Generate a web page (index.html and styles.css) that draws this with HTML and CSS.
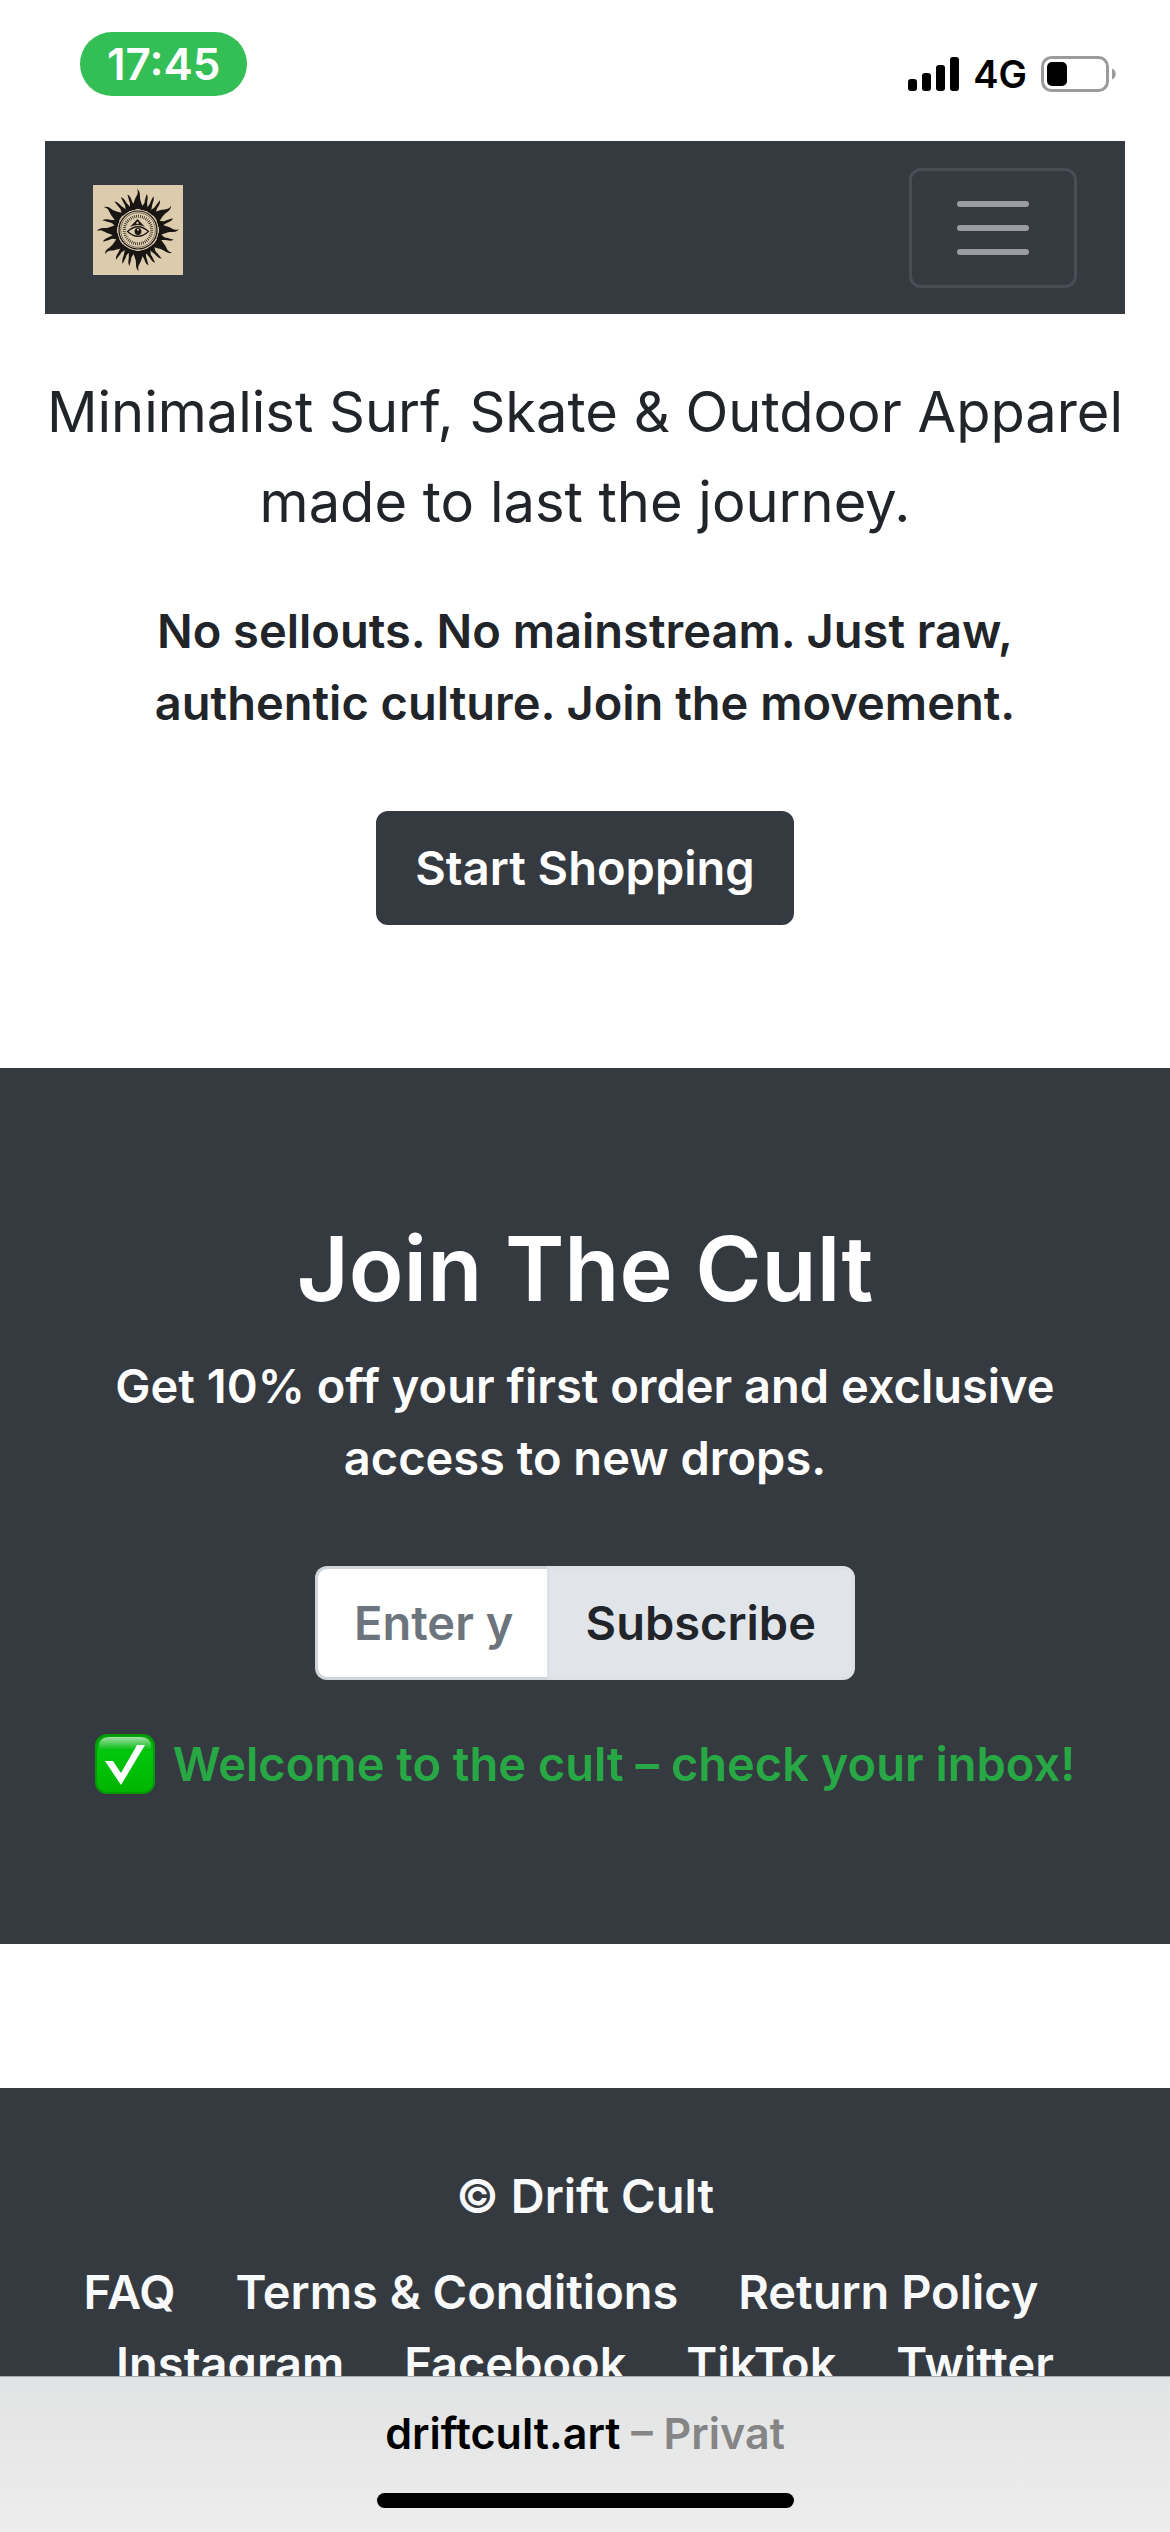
FILE: index.html
```html
<!DOCTYPE html>
<html lang="en">
<head>
<meta charset="utf-8">
<meta name="viewport" content="width=device-width, initial-scale=1">
<title>Drift Cult</title>
<link rel="stylesheet" href="styles.css">
</head>
<body>
<div class="status-bar">
  <div class="status-time">17:45</div>
  <div class="status-icons">
    <svg class="signal" width="51" height="36" viewBox="0 0 51 36" aria-hidden="true">
      <rect x="0" y="23" width="9" height="12" rx="3"/>
      <rect x="14" y="17" width="9" height="18" rx="3"/>
      <rect x="28" y="9" width="9" height="26" rx="3"/>
      <rect x="42" y="1" width="9" height="34" rx="3"/>
    </svg>
    <span class="network">4G</span>
    <svg class="battery" width="75" height="36" viewBox="0 0 75 36" aria-hidden="true">
      <rect x="1.5" y="1.5" width="65" height="33" rx="9" fill="none" stroke="#9b9b9b" stroke-width="3"/>
      <rect x="6" y="6" width="20" height="24" rx="5"/>
      <path d="M71 12.500c5 2 5 9 0 11z" fill="#9b9b9b"/>
    </svg>
  </div>
</div>

<header class="navbar">
  <a class="brand" href="#" aria-label="Drift Cult home">
    <svg class="logo" width="90" height="90" viewBox="-45 -45 90 90" aria-hidden="true">
      <defs>
        <path id="ray-big" d="M-7-20C-5-25-4-28-3-31C-1-35 1-37-1-41C2-39 2-36 2-33C2-29 4-26 6-20Q0-22-7-20z"/>
        <path id="ray-small" d="M-3-20C-3-25 0-26-1-30Q-1-33-1-37C2-34 1-31 2-28C3-25 3-23 3-20Q0-21-3-20z"/>
      </defs>
      <rect x="-45" y="-45" width="90" height="90" fill="#dccbac"/>
      <g fill="#191513">
        <use href="#ray-big"/>
        <use href="#ray-big" transform="rotate(55)"/>
        <use href="#ray-big" transform="rotate(90)"/>
        <use href="#ray-big" transform="rotate(125)"/>
        <use href="#ray-big" transform="rotate(180)"/>
        <use href="#ray-big" transform="rotate(235)"/>
        <use href="#ray-big" transform="rotate(270)"/>
        <use href="#ray-big" transform="rotate(305)"/>
        <use href="#ray-small" transform="rotate(15)"/>
        <use href="#ray-small" transform="rotate(26)"/>
        <use href="#ray-small" transform="rotate(38)"/>
        <use href="#ray-small" transform="rotate(73)"/>
        <use href="#ray-small" transform="rotate(107)"/>
        <use href="#ray-small" transform="rotate(142)"/>
        <use href="#ray-small" transform="rotate(154)"/>
        <use href="#ray-small" transform="rotate(165)"/>
        <use href="#ray-small" transform="rotate(195)"/>
        <use href="#ray-small" transform="rotate(206)"/>
        <use href="#ray-small" transform="rotate(218)"/>
        <use href="#ray-small" transform="rotate(253)"/>
        <use href="#ray-small" transform="rotate(287)"/>
        <use href="#ray-small" transform="rotate(322)"/>
        <use href="#ray-small" transform="rotate(334)"/>
        <use href="#ray-small" transform="rotate(345)"/>
      </g>
      <circle r="20.500" fill="#dccbac"/>
      <g fill="none" stroke="#191513">
        <circle r="19" stroke-width="1.200"/>
        <circle r="17.300" stroke-width=".5"/>
        <circle r="13.700" stroke-width="3" stroke-dasharray=".7 1.250"/>
      </g>
      <path d="M-.5-11L-10 0 0 8 10 0z" fill="#dccbac"/>
      <path d="M-.5-11L7-3Q0-7-8-3z" fill="#191513"/>
      <circle cx="-.5" cy="-7" r="1.200" fill="#dccbac"/>
      <path d="M-10.500 1.500Q0-8 10.500 1.500Q0 11-10.500 1.500z" fill="#dccbac" stroke="#191513" stroke-width="1.200"/>
      <circle cy="1.500" r="3.400" fill="#191513"/>
      <circle cy="-.2" r="1" fill="#dccbac"/>
    </svg>
  </a>
  <button class="toggler" type="button" aria-label="Toggle navigation">
    <svg width="72" height="54" viewBox="0 0 72 54" aria-hidden="true">
      <path d="M3 3h66M3 27h66M3 51h66" stroke="#9a9ca0" stroke-width="6" stroke-linecap="round"/>
    </svg>
  </button>
</header>

<main>
  <section class="hero">
    <p class="lead">Minimalist Surf, Skate &amp; Outdoor Apparel made to last the journey.</p>
    <p class="tagline">No sellouts. No mainstream. Just raw, authentic culture. Join the movement.</p>
    <a class="btn btn-dark" href="#">Start Shopping</a>
  </section>

  <section class="signup">
    <h2>Join The Cult</h2>
    <p>Get 10% off your first order and exclusive access to new drops.</p>
    <form class="input-group">
      <input type="email" placeholder="Enter your email" aria-label="Email address">
      <button class="btn btn-light" type="button">Subscribe</button>
    </form>
    <p class="success">
      <svg width="60" height="60" viewBox="0 0 60 60" aria-hidden="true">
        <defs>
          <linearGradient id="tick-fill" x2="0" y2="1">
            <stop offset="0" stop-color="#00a50a"/>
            <stop offset=".3" stop-color="#00c70c"/>
            <stop offset="1" stop-color="#00b400"/>
          </linearGradient>
          <linearGradient id="tick-shine" x2="0" y2="1">
            <stop offset="0" stop-color="#fff" stop-opacity=".65"/>
            <stop offset="1" stop-color="#fff" stop-opacity="0"/>
          </linearGradient>
        </defs>
        <rect x="1" y="1" width="58" height="58" rx="11" fill="url(#tick-fill)" stroke="#009a06" stroke-width="2"/>
        <path d="M4 16V13Q4 3 14 3H46Q56 3 56 13V16z" fill="url(#tick-shine)"/>
        <path d="M10 27h8l8 12 16-28h8L26 51z" fill="#fff"/>
      </svg>
      <span>Welcome to the cult – check your inbox!</span>
    </p>
  </section>
</main>

<footer class="footer">
  <p>© Drift Cult</p>
  <ul class="links">
    <li><a href="#">FAQ</a></li>
    <li><a href="#">Terms &amp; Conditions</a></li>
    <li><a href="#">Return Policy</a></li>
    <li><a href="#">Instagram</a></li>
    <li><a href="#">Facebook</a></li>
    <li><a href="#">TikTok</a></li>
    <li><a href="#">Twitter</a></li>
  </ul>
</footer>

<div class="browser-bar">
  <div class="address">driftcult.art <span>– Privat</span></div>
  <div class="home-indicator"></div>
</div>
</body>
</html>
```
FILE: styles.css
```css
:root {
  --dark: #353940;
  --text: #212529;
  --light: #f8f9fa;
}

* {
  box-sizing: border-box;
}

body {
  margin: 0;
  background: #fff;
  color: var(--text);
  font: 600 47px/72px Inter, "Liberation Sans", sans-serif;
}

p,
h2,
ul {
  margin: 0;
  padding: 0;
}

a {
  color: inherit;
  text-decoration: none;
}

svg {
  display: block;
  flex: none;
}

/* Phone status bar */
.status-bar {
  display: flex;
  justify-content: space-between;
  align-items: flex-start;
  padding: 32px 54px 45px 80px;
  color: #000;
}

.status-time {
  padding: 0 27px;
  border-radius: 32px;
  background: #34be56;
  color: #fff;
  font-size: 44px;
  line-height: 64px;
}

.status-icons {
  display: flex;
  align-items: center;
  gap: 14px;
  padding-top: 24px;
}

.network {
  font-size: 38px;
  line-height: 36px;
}

/* Site header */
.navbar {
  display: flex;
  justify-content: space-between;
  align-items: center;
  margin: 0 45px;
  padding: 27px 48px 26px;
  background: var(--dark);
}

.brand {
  padding-top: 4px;
}

.toggler {
  padding: 30px 45px;
  border: 3px solid #4a4d54;
  border-radius: 12px;
  background: none;
}

/* Hero */
.hero {
  padding: 53px 45px 143px;
  text-align: center;
}

.lead {
  margin-bottom: 48px;
  font-size: 56px;
  font-weight: 400;
  line-height: 90px;
}

.tagline {
  max-width: 960px;
  margin: 0 auto 72px;
}

.btn {
  display: block;
  padding: 18px 36px;
  border: 3px solid transparent;
  border-radius: 12px;
  font: inherit;
}

.btn-dark {
  width: fit-content;
  margin: 0 auto;
  border-color: var(--dark);
  background: var(--dark);
  color: #fff;
}

.btn-light {
  border-color: #dde1e6;
  border-radius: 0 12px 12px 0;
  background: #e1e4e9;
  color: var(--text);
}

/* Newsletter */
.signup {
  padding: 144px 45px;
  background: var(--dark);
  color: #fff;
  text-align: center;
}

.signup h2 {
  margin-bottom: 24px;
  font-size: 90px;
  font-weight: 600;
  line-height: 114px;
}

.input-group {
  display: flex;
  width: 50%;
  margin: 72px auto 48px;
}

.input-group input {
  flex: 1;
  min-width: 0;
  padding: 18px 34px 18px 36px;
  border: 3px solid #ced4da;
  border-right: 0;
  border-radius: 12px 0 0 12px;
  background: #fff;
  color: #495057;
  font: inherit;
}

.input-group input::placeholder {
  color: #6c757d;
  opacity: 1;
}

.success {
  display: flex;
  justify-content: center;
  align-items: center;
  gap: 18px;
  color: #28a745;
}

/* Footer */
.footer {
  margin-top: 144px;
  padding: 72px 45px;
  background: var(--dark);
  color: var(--light);
  text-align: center;
}

.links {
  margin-top: 24px;
  list-style: none;
}

.links li {
  display: inline-block;
}

.links li:not(:last-child) {
  margin-right: 48px;
}

/* Browser chrome pinned to the bottom edge */
.browser-bar {
  position: fixed;
  inset: auto 0 0;
  padding: 24px 0;
  border-top: 1px solid #a9abae;
  background: linear-gradient(#e2e3e4, #ededed);
  color: #000;
  text-align: center;
}

.address {
  font-size: 43px;
  line-height: 64px;
}

.address span {
  color: #858586;
}

.home-indicator {
  width: 417px;
  height: 15px;
  margin: 28px auto 0;
  border-radius: 8px;
  background: #000;
}
```
